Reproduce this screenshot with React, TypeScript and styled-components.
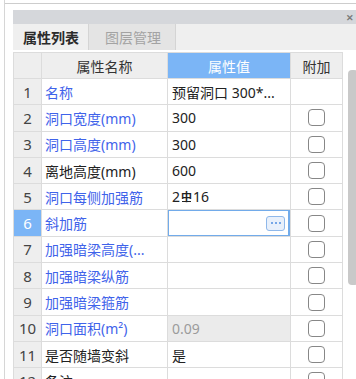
import React from 'react';
import styled, { createGlobalStyle } from 'styled-components';

type Row = {
  name: string;
  value?: string;
  blue: boolean;
  check: boolean;
  readonly?: boolean;
  selected?: boolean;
  rebar?: boolean;
};

const rows: Row[] = [
  { name: '名称', value: '预留洞口 300*...', blue: true, check: false },
  { name: '洞口宽度(mm)', value: '300', blue: true, check: true },
  { name: '洞口高度(mm)', value: '300', blue: true, check: true },
  { name: '离地高度(mm)', value: '600', blue: false, check: true },
  { name: '洞口每侧加强筋', value: '2', blue: true, check: true, rebar: true },
  { name: '斜加筋', blue: true, check: true, selected: true },
  { name: '加强暗梁高度(...', blue: true, check: true },
  { name: '加强暗梁纵筋', blue: true, check: true },
  { name: '加强暗梁箍筋', blue: true, check: true },
  { name: '洞口面积(m²)', value: '0.09', blue: true, check: true, readonly: true },
  { name: '是否随墙变斜', value: '是', blue: false, check: true },
  { name: '备注', blue: false, check: true },
];

export default function App(): JSX.Element {
  return (
    <>
      <GlobalStyle />
      <Frame>
        <TopLine />
        <Panel>
          <TitleBar>
            <Close>✕</Close>
          </TitleBar>
          <Tabs>
            <Tab active>属性列表</Tab>
            <Tab>图层管理</Tab>
          </Tabs>
          <Body>
            <Grid>
              <HeadCell />
              <HeadCell>属性名称</HeadCell>
              <HeadCell active>属性值</HeadCell>
              <HeadCell>附加</HeadCell>
              {rows.map((row, i) => (
                <React.Fragment key={i}>
                  <NumCell active={row.selected}>{i + 1}</NumCell>
                  <NameCell blue={row.blue}>{row.name}</NameCell>
                  <ValueCell readonly={row.readonly}>
                    {row.selected ? (
                      <Editor>
                        <MoreButton>
                          <Dot />
                          <Dot />
                          <Dot />
                        </MoreButton>
                      </Editor>
                    ) : (
                      <ValueText readonly={row.readonly}>
                        {row.value}
                        {row.rebar && (
                          <>
                            <Rebar>中</Rebar>16
                          </>
                        )}
                      </ValueText>
                    )}
                  </ValueCell>
                  <CheckCell>{row.check && <CheckBox />}</CheckCell>
                </React.Fragment>
              ))}
            </Grid>
            <ScrollTrack>
              <Thumb />
            </ScrollTrack>
          </Body>
        </Panel>
      </Frame>
    </>
  );
}

const GlobalStyle = createGlobalStyle`
  html, body {
    margin: 0;
    background: #ffffff;
    overflow: hidden;
  }
  body {
    font-family: 'Noto Sans', 'Noto Sans CJK SC', sans-serif;
    color: #2b2b2b;
  }
`;

const Frame = styled.div`
  width: 351px;
  height: 379px;
  margin-left: 4px;
  border-left: 1px solid #d6d6d6;
  overflow: hidden;
`;

const TopLine = styled.div`
  height: 3px;
  border-bottom: 1px solid #cdcdcd;
  margin-bottom: 6px;
`;

const Panel = styled.div`
  margin-left: 8px;
  display: flex;
  flex-direction: column;
`;

const TitleBar = styled.div`
  height: 14px;
  background: #d5d7db;
  display: flex;
  justify-content: flex-end;
  align-items: center;
  padding-right: 2px;
`;

const Close = styled.span`
  font-size: 9px;
  font-weight: 700;
  color: #7a7a7a;
  line-height: 1;
`;

const Tabs = styled.div`
  height: 26px;
  background: #efefef;
  display: flex;
  margin-bottom: 2px;
`;

const Tab = styled.div<{ active?: boolean }>`
  display: flex;
  align-items: center;
  padding: ${(p) => (p.active ? '0 9px 0 10px' : '0 14px 0 16px')};
  font-family: 'Noto Sans CJK SC', sans-serif;
  font-size: 14px;
  font-weight: ${(p) => (p.active ? 700 : 400)};
  color: ${(p) => (p.active ? '#2b2b2b' : '#a3a3a3')};
  background: ${(p) => (p.active ? '#efefef' : '#e4e4e4')};
  border-right: 1px solid #d4d4d4;
`;

const Body = styled.div`
  display: flex;
`;

const Grid = styled.div`
  display: grid;
  grid-template-columns: 27px 125px 122px 51px;
  grid-template-rows: 25px repeat(12, 25.3px);
  gap: 1px;
  padding: 1px;
  background: #dcdcdc;
  align-self: flex-start;
`;

const HeadCell = styled.div<{ active?: boolean }>`
  display: flex;
  align-items: center;
  justify-content: center;
  font-family: 'Noto Sans CJK SC', sans-serif;
  font-size: 14px;
  color: ${(p) => (p.active ? '#ffffff' : '#333333')};
  background: ${(p) => (p.active ? '#7bb5f6' : '#eeeeee')};
`;

const NumCell = styled.div<{ active?: boolean }>`
  display: flex;
  align-items: center;
  justify-content: center;
  font-size: 15px;
  color: ${(p) => (p.active ? '#ffffff' : '#444444')};
  background: ${(p) => (p.active ? '#7bb5f6' : '#eeeeee')};
`;

const NameCell = styled.div<{ blue: boolean }>`
  display: flex;
  align-items: center;
  padding-left: 3px;
  white-space: nowrap;
  overflow: hidden;
  font-family: 'Noto Sans', 'Noto Sans CJK SC', sans-serif;
  font-size: 14px;
  color: ${(p) => (p.blue ? '#3f63ea' : '#222222')};
  background: #ffffff;
`;

const ValueCell = styled.div<{ readonly?: boolean }>`
  display: flex;
  align-items: center;
  background: ${(p) => (p.readonly ? '#ebebeb' : '#ffffff')};
  overflow: hidden;
`;

const ValueText = styled.span<{ readonly?: boolean }>`
  padding-left: 4px;
  white-space: nowrap;
  font-family: 'Noto Sans', 'Noto Sans CJK SC', sans-serif;
  font-size: 14px;
  color: ${(p) => (p.readonly ? '#9b9b9b' : '#222222')};
`;

const Rebar = styled.span`
  display: inline-block;
  position: relative;
  font-size: 11px;
  font-weight: 700;
  margin: 0 1px;
  vertical-align: 1px;
  &::after {
    content: '';
    position: absolute;
    left: 1px;
    right: 1px;
    bottom: 2px;
    height: 1px;
    background: #222222;
  }
`;

const Editor = styled.div`
  flex: 1;
  align-self: stretch;
  margin: -1px 0 -1px -1px;
  border: 2px solid #72abea;
  background: #ffffff;
  display: flex;
  align-items: center;
  justify-content: flex-end;
  padding-right: 3px;
`;

const MoreButton = styled.div`
  width: 17px;
  height: 13px;
  border: 1px solid #8fb8ea;
  border-radius: 3px;
  background: #e8f0fb;
  display: flex;
  align-items: center;
  justify-content: center;
  gap: 2px;
`;

const Dot = styled.span`
  width: 2px;
  height: 2px;
  border-radius: 1px;
  background: #4f8ee0;
`;

const CheckCell = styled.div`
  display: flex;
  align-items: center;
  justify-content: center;
  background: #ffffff;
`;

const CheckBox = styled.div`
  width: 15px;
  height: 15px;
  border: 1.5px solid #878787;
  border-radius: 4px;
  background: #ffffff;
`;

const ScrollTrack = styled.div`
  flex: 1;
  padding: 18px 0 0 5px;
`;

const Thumb = styled.div`
  width: 10px;
  height: 215px;
  border-radius: 4px;
  background: #c9c9c9;
`;
